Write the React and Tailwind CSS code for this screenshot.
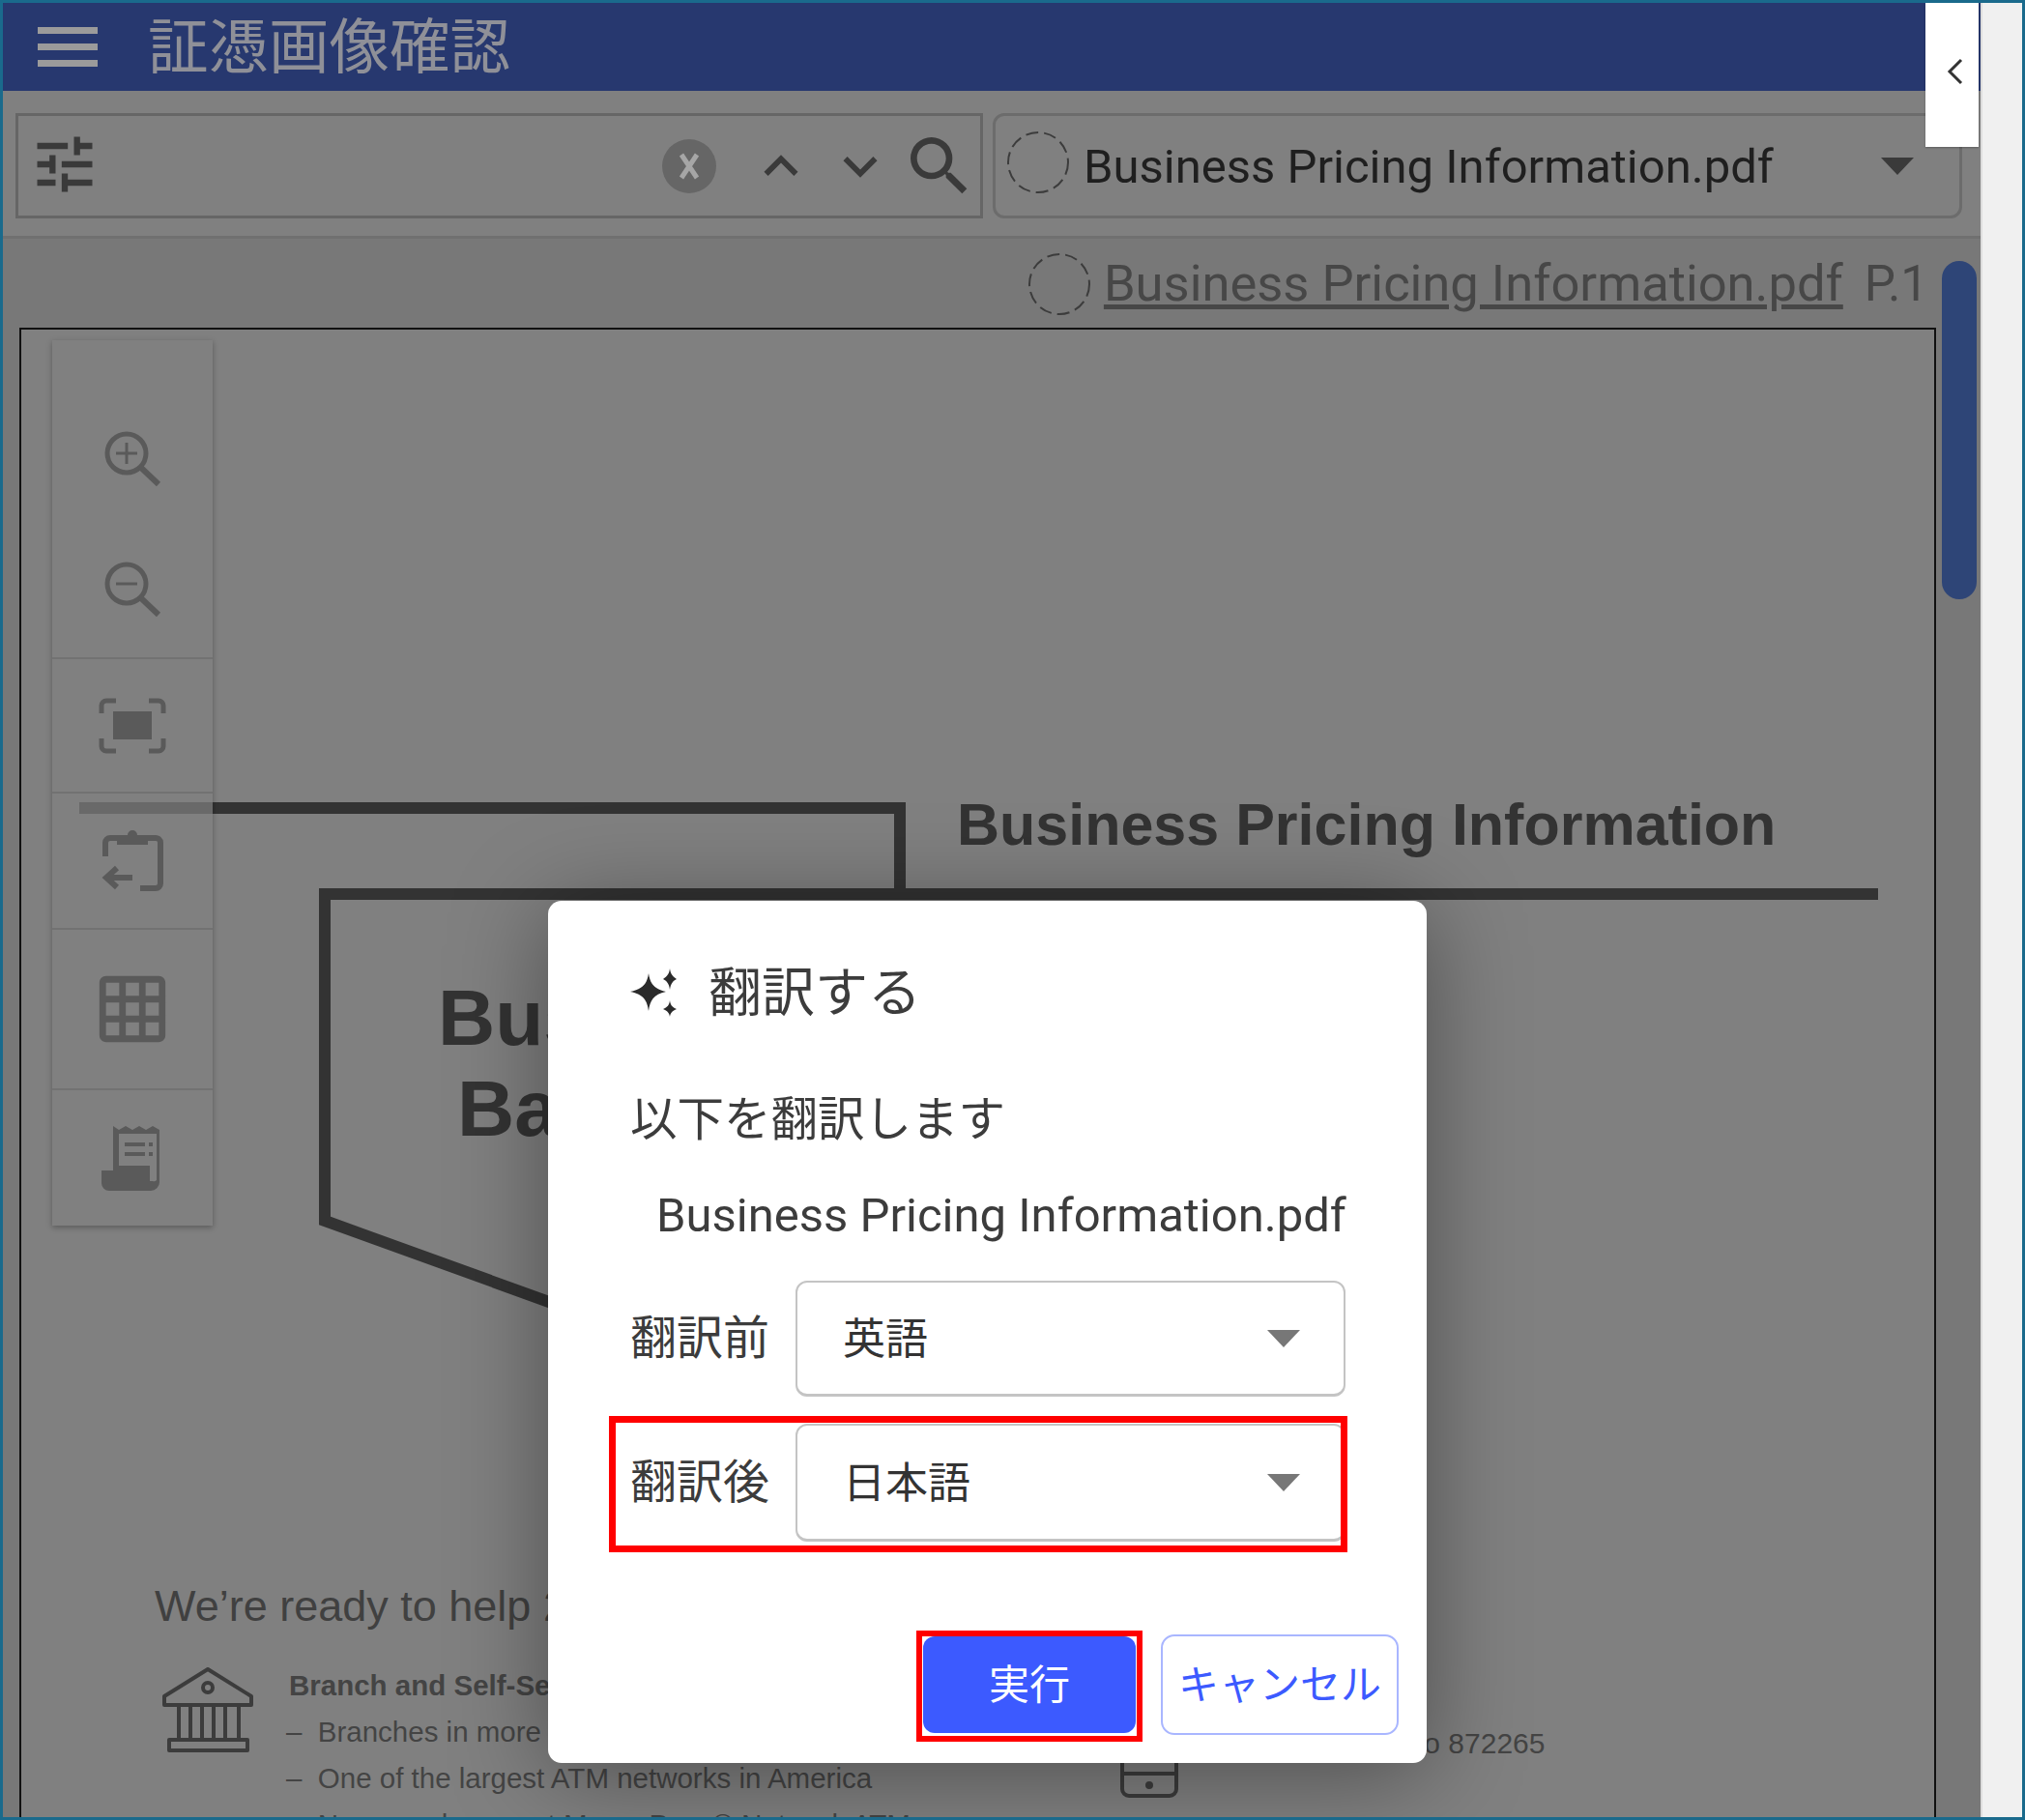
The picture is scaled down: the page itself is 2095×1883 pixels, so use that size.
// App.jsx
import React from 'react';
import { MdTune, MdSearch, MdKeyboardArrowUp, MdKeyboardArrowDown, MdGridOn } from 'react-icons/md';

const jp = { fontFamily: '"Noto Sans CJK JP", sans-serif' };
const FILE_NAME = 'Business Pricing Information.pdf';

function DashedCircle({ className }) {
  return (
    <svg width="68" height="68" viewBox="0 0 68 68" className={`shrink-0 ${className}`}>
      <circle cx="34" cy="34" r="31" fill="none" stroke="#3c3c3c" strokeWidth="2" strokeDasharray="13 6" />
    </svg>
  );
}

function Caret({ className }) {
  return (
    <svg width="36" height="20" viewBox="0 0 36 20" className={className}>
      <path d="M1 1H35L18 19Z" fill="currentColor" />
    </svg>
  );
}

function ClearIcon() {
  return (
    <svg width="56" height="56" viewBox="0 0 56 56" className="ml-auto">
      <circle cx="28" cy="28" r="28" fill="#666" />
      <path d="M20 16L36 40M36 16L20 40" stroke="#a6a6a6" strokeWidth="5" />
    </svg>
  );
}

function ZoomIcon({ plus }) {
  return (
    <svg width="60" height="60" viewBox="0 0 60 60" fill="none" stroke="#5a5a5a" className="shrink-0">
      <circle cx="24" cy="24" r="20" strokeWidth="5" />
      <path d="M38 38L57 56" strokeWidth="6" />
      <path d={plus ? 'M13 24H35M24 13V35' : 'M13 24H35'} strokeWidth="3" />
    </svg>
  );
}

function FitIcon() {
  return (
    <svg width="70" height="58" viewBox="0 0 70 58" fill="none" stroke="#5a5a5a" strokeWidth="5">
      <path d="M3 16V8a5 5 0 0 1 5-5H18M52 3H62a5 5 0 0 1 5 5V16M3 42V50a5 5 0 0 0 5 5H18M67 42V50a5 5 0 0 1-5 5H52" />
      <rect x="15" y="14" width="40" height="29" fill="#5a5a5a" stroke="none" />
    </svg>
  );
}

function ClipboardIcon() {
  return (
    <svg width="68" height="70" viewBox="0 0 68 70" fill="none" stroke="#5a5a5a" strokeWidth="6">
      <path d="M6 30V16a5 5 0 0 1 5-5H57a5 5 0 0 1 6 5V58a5 5 0 0 1-5 5H42" />
      <path d="M18 18V8H29a5 5 0 0 1 10 0H50V18Z" fill="#5a5a5a" stroke="none" />
      <path d="M34 52H8M18 42L7 52L18 62" />
    </svg>
  );
}

function ReceiptIcon() {
  return (
    <svg width="64" height="70" viewBox="0 0 64 70" fill="none">
      <path d="M12 48V2l6 4 7-4 7 4 7-4 7 4 7-4 7 4V60a9 9 0 0 1-9 9H8a8 8 0 0 1-8-8V48Z" fill="#5a5a5a" />
      <path d="M18 10H57V58a4 4 0 0 1-4 1H50V43H18Z" fill="#808080" />
      <path d="M24 21H45M24 31H45M49 21H53M49 31H53" stroke="#5a5a5a" strokeWidth="4" />
    </svg>
  );
}

function Sparkles() {
  return (
    <svg width="50" height="50" viewBox="0 0 50 50" fill="#2b2b2b" className="shrink-0">
      <path d="M19 5C20.500 15 24 21 37 24C24 27 20.500 33 19 44C17.500 33 14 27 0 24C14 21 17.500 15 19 5Z" />
      <path d="M41 0C41.600 5 43.500 8 48 11C43.500 13 41.600 17 41 22C40.400 17 38.500 13 34 11C38.500 8 40.400 5 41 0Z" />
      <path d="M41 33C41.600 38 43.500 40 48 42C43.500 44 41.600 46 41 50C40.400 46 38.500 44 34 42C38.500 40 40.400 38 41 33Z" />
    </svg>
  );
}

function BuildingIcon() {
  return (
    <svg width="100" height="92" viewBox="0 0 100 92" fill="none" stroke="#3c3c3c" strokeWidth="4">
      <path d="M3 30L48 2L93 30V39H3Z" strokeLinejoin="round" />
      <circle cx="48" cy="21" r="5" />
      <path d="M18 75V39H30V75H42V39H54V75H66V39H80V75" />
      <path d="M8 75H89V86H8Z" strokeLinejoin="round" />
    </svg>
  );
}

function SelectBox({ title, value, height }) {
  return (
    <div className="flex items-center">
      <span className="-mt-[10px] w-[171px] text-[48px] leading-none text-[#3c3c3c]" style={jp}>{title}</span>
      <div
        className="flex w-[569px] items-center justify-between rounded-[12px] border-2 border-b-[3px] border-[#c4c4c4] pl-[47px] pr-[44px]"
        style={{ height }}
      >
        <span className="-mt-[6px] text-[44px] text-[#333]" style={jp}>{value}</span>
        <Caret className="text-[#777]" />
      </div>
    </div>
  );
}

function TranslateDialog() {
  return (
    <div className="absolute left-[564px] top-[929px] z-20 flex h-[892px] w-[909px] flex-col rounded-[14px] bg-white pl-[85px] pr-[84px] pt-[70px] shadow-[0_10px_100px_rgba(0,0,0,0.4)]">
      <div className="flex h-[50px] items-center">
        <Sparkles />
        <span className="-mt-[9px] ml-[31px] text-[55px] leading-none text-[#3c3c3c]" style={jp}>翻訳する</span>
      </div>
      <p className="mt-[80px] text-[48.500px] leading-[44px] text-[#3c3c3c]" style={jp}>以下を翻訳します</p>
      <p className="mt-[54px] whitespace-nowrap pl-[27px] font-['Roboto'] text-[49px] leading-[56px] text-[#3c3c3c]">{FILE_NAME}</p>
      <div className="mt-[39px] flex flex-col gap-[28px]">
        <SelectBox title="翻訳前" value="英語" height={120} />
        <SelectBox title="翻訳後" value="日本語" height={122} />
      </div>
      <div className="-mr-[55px] mt-[98px] flex justify-end gap-[26px]">
        <button className="flex h-[100px] w-[220px] items-center justify-center rounded-[12px] bg-[#3c5aff] pb-[8px] text-[42px] text-white" style={jp}>実行</button>
        <button className="-my-[2px] flex h-[104px] w-[246px] items-center justify-center rounded-[14px] border-2 border-[#a9b6ff] pb-[8px] text-[42px] text-[#3c5aff]" style={jp}>キャンセル</button>
      </div>

      {/* 赤枠の注記 */}
      <div className="absolute left-[63px] top-[533px] h-[141px] w-[764px] border-[7px] border-[#ff0000]" />
      <div className="absolute left-[381px] top-[755px] h-[115px] w-[234px] border-[6px] border-[#ff0000]" />
    </div>
  );
}

function ViewerTools() {
  return (
    <div className="absolute left-[51px] top-[105px] z-10 flex w-[166px] flex-col bg-[#808080]/70 shadow-[0_2px_6px_rgba(0,0,0,0.3)]">
      <div className="flex h-[330px] flex-col items-center gap-[75px] border-b-2 border-[#727272] pt-[93px]">
        <ZoomIcon plus />
        <ZoomIcon />
      </div>
      <div className="flex h-[139px] items-center justify-center border-b-2 border-[#727272]"><FitIcon /></div>
      <div className="flex h-[141px] items-center justify-center border-b-2 border-[#727272]"><ClipboardIcon /></div>
      <div className="flex h-[166px] items-center justify-center border-b-2 border-[#727272] text-[#5a5a5a]"><MdGridOn size={82} /></div>
      <div className="flex h-[140px] items-center justify-center"><ReceiptIcon /></div>
    </div>
  );
}

function PdfPage() {
  return (
    <div className="relative ml-[17px] h-[1560px] w-[1983px] overflow-hidden border-2 border-[#111] bg-[#808080] font-['Liberation_Sans'] text-[#333]">
      <svg width="1979" height="1556" className="absolute inset-0" fill="none" stroke="#333" strokeWidth="12">
        <path d="M60 495H909V584" />
        <path d="M1921 584H314V922L640 1040" />
      </svg>

      <h1 className="absolute left-[968px] top-[482px] whitespace-nowrap text-[61px] font-bold leading-none">Business Pricing Information</h1>
      <div className="absolute left-[431px] top-[665px] w-[340px] text-center text-[82px] font-bold leading-[94px]">
        Business<br /><span className="pl-[20px]">Banking</span>
      </div>
      <p className="absolute left-[138px] top-[1298px] whitespace-nowrap text-[45px] leading-none text-[#404040]">We’re ready to help 24/7</p>

      <div className="absolute left-[145px] top-[1384px]"><BuildingIcon /></div>
      <div className="absolute left-[274px] top-[1379px] whitespace-nowrap text-[29.500px] leading-[48px] text-[#444]">
        <div className="pl-[3px] font-bold">Branch and Self-Service</div>
        <div>–&nbsp; Branches in more than 20 states</div>
        <div>–&nbsp; One of the largest ATM networks in America</div>
        <div>&nbsp;&nbsp;&nbsp;&nbsp;No annual account MoneyPass® Network ATMs</div>
      </div>

      <svg width="62" height="100" viewBox="0 0 62 100" className="absolute left-[1136px] top-[1420px]" fill="none" stroke="#3c3c3c" strokeWidth="4">
        <rect x="3" y="3" width="56" height="94" rx="7" />
        <path d="M3 74H59" />
        <circle cx="31" cy="86" r="2" fill="#3c3c3c" />
      </svg>
      <p className="absolute left-[1443px] top-[1448px] text-[30px] leading-none text-[#444]">to 872265</p>
    </div>
  );
}

export default function App() {
  return (
    <div className="flex h-[1883px] w-[2095px] overflow-hidden border-[3px] border-[#1a6a8c] bg-[#f0f0f0] font-['Roboto']">
      <div className="relative flex w-[2046px] flex-col bg-[#787878]">
        <header className="flex h-[91px] shrink-0 items-center bg-[#27386f] pl-[36px]">
          <div className="flex w-[62px] flex-col gap-[10px]">
            <span className="h-[7px] bg-[#9b9b9b]" />
            <span className="h-[7px] bg-[#9b9b9b]" />
            <span className="h-[7px] bg-[#9b9b9b]" />
          </div>
          <h1 className="-mt-[8px] ml-[52px] text-[62.500px] font-normal leading-none text-[#8f9098]" style={jp}>証憑画像確認</h1>
        </header>

        <div className="flex h-[153px] shrink-0 gap-[10px] border-b-[3px] border-[#707070] bg-[#808080] pl-[13px] pt-[23px]">
          <div className="flex h-[109px] w-[1001px] items-center border-[3px] border-[#666] pl-[16px] pr-[2px] text-[#3a3a3a]">
            <MdTune size={76} className="-ml-[6px] -mt-[3px]" />
            <ClearIcon />
            <MdKeyboardArrowUp size={70} className="ml-[32px]" />
            <MdKeyboardArrowDown size={70} className="ml-[12px]" />
            <MdSearch size={80} className="ml-[7px]" />
          </div>
          <div className="flex h-[109px] w-[1003px] items-center rounded-[12px] border-[3px] border-[#6c6c6c] pl-[10px] pr-[46px]">
            <DashedCircle className="-mt-[8px]" />
            <span className="ml-[13px] mt-[2px] text-[49px] leading-none text-[#1f1f1f]">{FILE_NAME}</span>
            <Caret className="ml-auto text-[#3a3a3a]" />
          </div>
        </div>

        <div className="relative min-h-0 flex-1 overflow-hidden">
          <div className="flex h-[92px] items-center justify-end pr-[54px] text-[#474747]">
            <DashedCircle className="mt-[2px]" />
            <span className="ml-[12px] text-[52.500px] leading-none underline underline-offset-4">{FILE_NAME}</span>
            <span className="ml-[22px] text-[51px] leading-none">P.1</span>
          </div>
          <PdfPage />
          <ViewerTools />
          <div className="absolute left-[2006px] top-[23px] h-[350px] w-[36px] rounded-full bg-[#2e4577]" />
        </div>

        {/* 開閉タブ */}
        <div className="absolute right-[2px] top-0 z-10 flex h-[149px] w-[55px] justify-center bg-white pl-[7px] pt-[57px] shadow-[0_1px_2px_rgba(0,0,0,0.3)]">
          <svg width="18" height="28" viewBox="0 0 18 28" fill="none" stroke="#333" strokeWidth="3"><path d="M15 2L3 14L15 26" /></svg>
        </div>
        <TranslateDialog />
      </div>
      <div className="flex-1 border-l-2 border-[#dcdcdc]" />
    </div>
  );
}
